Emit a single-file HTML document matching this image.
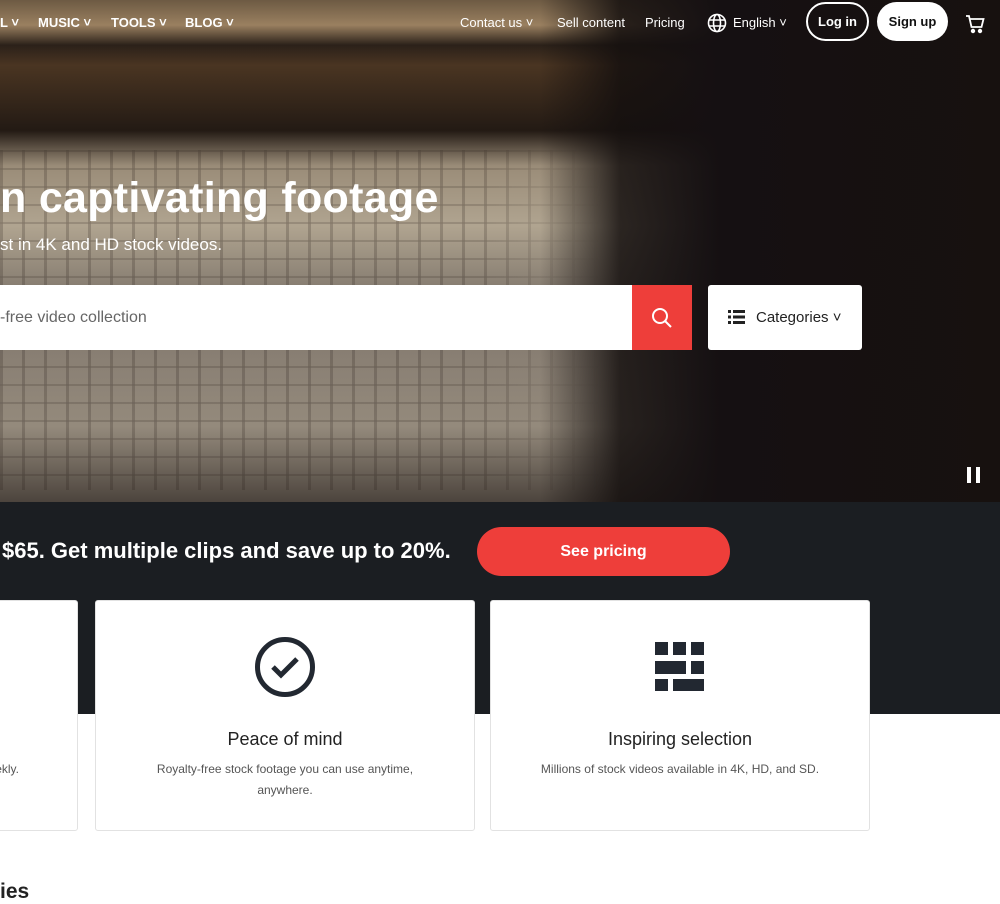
<!DOCTYPE html>
<html><head><meta charset="utf-8"><style>
*{margin:0;padding:0;box-sizing:border-box}
body{width:1000px;height:902px;overflow:hidden;background:#fff;font-family:"Liberation Sans",sans-serif;position:relative}
.hero{position:absolute;left:0;top:0;width:1000px;height:502px;background:
linear-gradient(90deg,rgba(0,0,0,0) 0,rgba(0,0,0,0) 54%,rgba(20,15,14,.85) 62%,#151012 72%,#17110f 100%),
linear-gradient(180deg,#6d5a43 0,#9a8060 5%,#2b2119 9%,#4a3522 13%,#231a14 26%,#9a8c78 33%,#b0a490 45%,#7d746a 60%,#8a8074 72%,#948a7c 85%,#4c443d 100%);}
.tex{position:absolute;left:0;top:150px;width:600px;height:340px;opacity:.35;background:
repeating-linear-gradient(90deg,rgba(40,30,25,.6) 0 3px,rgba(0,0,0,0) 3px 22px),
repeating-linear-gradient(180deg,rgba(40,30,25,.5) 0 2px,rgba(0,0,0,0) 2px 18px);
-webkit-mask:linear-gradient(90deg,#000 80%,transparent);mask:linear-gradient(90deg,#000 80%,transparent)}
.nav{position:absolute;top:15px;font-size:13px;color:#fff;font-weight:bold}
.band{position:absolute;left:0;top:502px;width:1000px;height:212px;background:#1b1e22}
.card{position:absolute;top:600px;height:231px;background:#fff;border:1px solid #e2e2e2;border-radius:3px;text-align:center}
.card h3{position:absolute;top:128px;width:100%;font-size:18px;font-weight:normal;color:#222}
.card p{position:absolute;top:158px;width:100%;font-size:12px;color:#555;line-height:21px}
</style></head><body>
<div class="hero"></div><div class="tex"></div>
<div class="nav" style="left:0">L ˅</div>
<div class="nav" style="left:38px">MUSIC ˅</div>
<div class="nav" style="left:111px">TOOLS ˅</div>
<div class="nav" style="left:185px">BLOG ˅</div>
<div class="nav" style="left:460px;font-weight:normal">Contact us ˅</div>
<div class="nav" style="left:557px;font-weight:normal">Sell content</div>
<div class="nav" style="left:645px;font-weight:normal">Pricing</div>
<svg style="position:absolute;left:707px;top:13px" width="20" height="20" viewBox="0 0 20 20" fill="none" stroke="#fff" stroke-width="1.6"><circle cx="10" cy="10" r="8.5"/><ellipse cx="10" cy="10" rx="3.5" ry="8.5"/><path d="M2 7h16M2 13h16"/></svg>
<div class="nav" style="left:733px;font-weight:normal">English ˅</div>
<div style="position:absolute;left:806px;top:2px;width:63px;height:39px;border:2px solid #fff;border-radius:20px;color:#fff;font-size:13px;font-weight:bold;text-align:center;line-height:35px">Log in</div>
<div style="position:absolute;left:877px;top:2px;width:71px;height:39px;background:#fff;border-radius:20px;color:#111;font-size:13px;font-weight:bold;text-align:center;line-height:39px">Sign up</div>
<svg style="position:absolute;left:965px;top:14px" width="20" height="20" viewBox="0 0 20 20" fill="none" stroke="#fff" stroke-width="1.8"><path d="M1 2h3l2.5 11h10l2-8H5"/><circle cx="8" cy="17" r="1.3" fill="#fff"/><circle cx="15" cy="17" r="1.3" fill="#fff"/></svg>
<div style="position:absolute;left:0;top:174px;font-size:43px;font-weight:bold;color:#fff;letter-spacing:.3px">n captivating footage</div>
<div style="position:absolute;left:0;top:235px;font-size:17px;color:#fff">st in 4K and HD stock videos.</div>
<div style="position:absolute;left:0;top:285px;width:632px;height:65px;background:#fff;font-size:16px;color:#666;line-height:65px">-free video collection</div>
<div style="position:absolute;left:632px;top:285px;width:60px;height:65px;background:#ee3e3a"><svg style="position:absolute;left:19px;top:22px" width="22" height="22" viewBox="0 0 22 22" fill="none" stroke="#fff" stroke-width="2"><circle cx="9" cy="9" r="7"/><path d="M14 14l6 6"/></svg></div>
<div style="position:absolute;left:708px;top:285px;width:154px;height:65px;background:#fff;border-radius:3px;font-size:15px;color:#222;line-height:65px;padding-left:48px">Categories ˅
<svg style="position:absolute;left:20px;top:25px" width="17" height="14" viewBox="0 0 17 14" fill="#222"><rect x="0" y="0" width="3" height="3"/><rect x="5" y="0" width="12" height="3"/><rect x="0" y="5.5" width="3" height="3"/><rect x="5" y="5.5" width="12" height="3"/><rect x="0" y="11" width="3" height="3"/><rect x="5" y="11" width="12" height="3"/></svg></div>
<div style="position:absolute;left:967px;top:467px;width:4px;height:16px;background:#fff"></div><div style="position:absolute;left:976px;top:467px;width:4px;height:16px;background:#fff"></div>
<div class="band"></div>
<div style="position:absolute;left:2px;top:538px;font-size:22px;font-weight:bold;color:#fff">$65. Get multiple clips and save up to 20%.</div>
<div style="position:absolute;left:477px;top:527px;width:253px;height:49px;background:#ee3e3a;border-radius:25px;color:#fff;font-size:16px;font-weight:bold;text-align:center;line-height:49px">See pricing</div>
<div class="card" style="left:-10px;width:88px"><p style="text-align:right;padding-right:58px">ekly.</p></div>
<div class="card" style="left:95px;width:380px">
<svg style="position:absolute;left:158px;top:35px" width="62" height="62" viewBox="0 0 62 62" fill="none" stroke="#222831" stroke-width="5"><circle cx="31" cy="31" r="27.5"/><path d="M19 31l8 8 16-16"/></svg>
<h3>Peace of mind</h3><p>Royalty-free stock footage you can use anytime,<br>anywhere.</p></div>
<div class="card" style="left:490px;width:380px">
<svg style="position:absolute;left:164px;top:40px" width="50" height="50" viewBox="0 0 50 50" fill="#222831"><rect x="0" y="1" width="13" height="13"/><rect x="18" y="1" width="13" height="13"/><rect x="36" y="1" width="13" height="13"/><rect x="0" y="20" width="31" height="13"/><rect x="36" y="20" width="13" height="13"/><rect x="0" y="38" width="13" height="12"/><rect x="18" y="38" width="31" height="12"/></svg>
<h3>Inspiring selection</h3><p>Millions of stock videos available in 4K, HD, and SD.</p></div>
<div style="position:absolute;left:0;top:880px;font-size:21px;font-weight:bold;color:#222">ies</div>
</body></html>
